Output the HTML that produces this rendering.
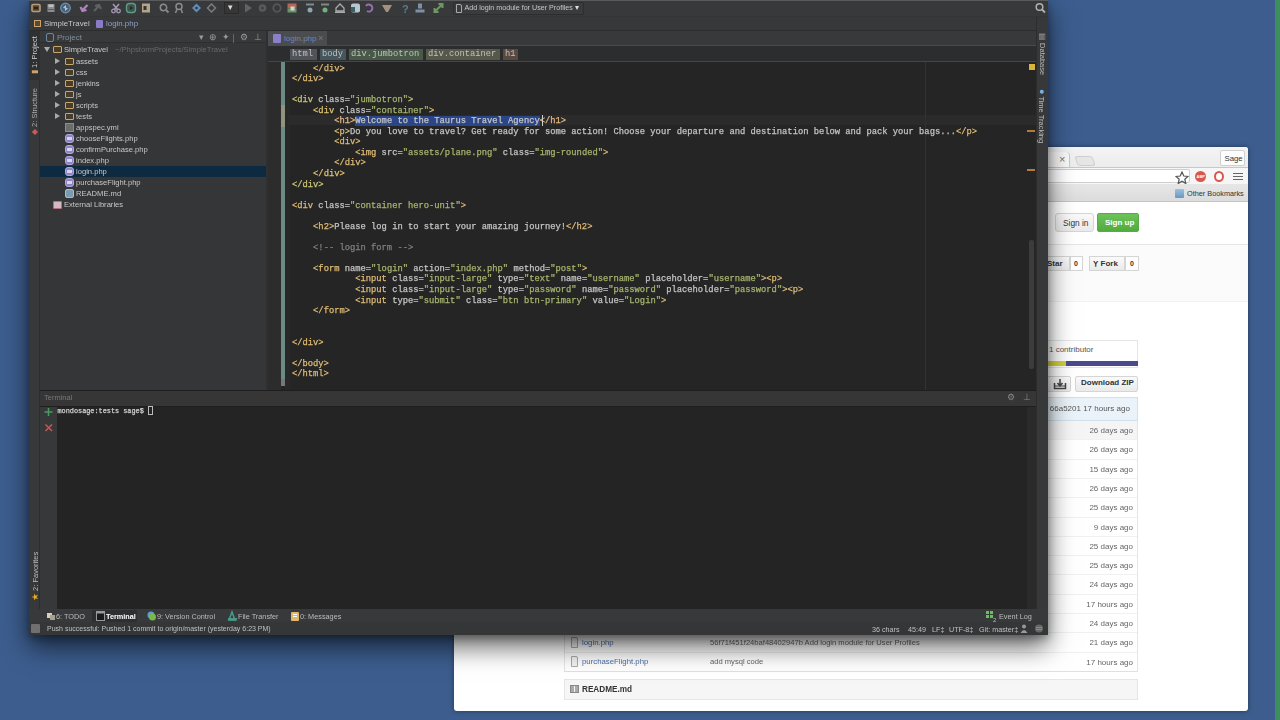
<!DOCTYPE html>
<html><head><meta charset="utf-8">
<style>
*{box-sizing:border-box}
html,body{margin:0;padding:0}
body{width:1280px;height:720px;overflow:hidden;position:relative;background:#3c5c8d;font-family:"Liberation Sans",sans-serif}
.a{position:absolute}
.code{position:absolute;font-family:"Liberation Mono",monospace;font-size:8.79px;white-space:pre;line-height:10.55px;color:#c4c4c4;-webkit-text-stroke:0.25px currentColor}
.t{color:#dfbb76}
.v{color:#a6b46e}
.cm{color:#7f7f7f}
</style></head><body>
<div style="position:absolute;left:0;top:0;width:1280px;height:720px;filter:blur(0.4px)"><div class="a" style="left:0px;top:0px;width:1280px;height:720px;background:#3c5d8e"></div>
<div class="a" style="left:1271px;top:0px;width:4px;height:720px;background:#3f5b90"></div>
<div class="a" style="left:1275px;top:0px;width:5px;height:720px;background:#3a8f5c"></div>
<div class="a" style="left:454px;top:147px;width:794px;height:564px;background:#fff;border-radius:3px;box-shadow:0 0 5px rgba(0,0,0,.4)"></div>
<div class="a" style="left:454px;top:147px;width:794px;height:20px;background:linear-gradient(#f4f4f4,#ececec);border-radius:3px 3px 0 0"></div>
<div class="a" style="left:454px;top:152px;width:616px;height:15px;background:#fafafa;border-right:1px solid #c9c9c9;border-radius:0 4px 0 0"></div>
<div class="a" style="left:1059px;top:153px;white-space:nowrap;font-size:11px;color:#777">×</div>
<div class="a" style="left:1076px;top:156px;width:18px;height:10px;background:#e6e6e6;border:1px solid #cfcfcf;border-radius:3px;transform:skewX(20deg)"></div>
<div class="a" style="left:1220px;top:150px;width:25px;height:16px;background:#fdfdfd;border:1px solid #d0d0d0;border-radius:2px"></div>
<div class="a" style="left:1224.5px;top:153.5px;white-space:nowrap;font-size:7.8px;color:#333">Sage</div>
<div class="a" style="left:454px;top:167px;width:794px;height:17px;background:#f6f6f6;border-top:1px solid #c8c8c8"></div>
<div class="a" style="left:454px;top:169px;width:736px;height:14px;background:#fff;border:1px solid #cfcfcf;border-radius:2px"></div>
<svg class="a" style="left:1175px;top:171px" width="14" height="14"><path d="M7 1 L8.8 5 L13 5.4 L9.8 8.2 L10.8 12.5 L7 10.2 L3.2 12.5 L4.2 8.2 L1 5.4 L5.2 5Z" fill="#fff" stroke="#555" stroke-width="1.2"/></svg>
<div class="a" style="left:1195px;top:171px;width:11px;height:11px;background:#d9574c;border-radius:50%"></div>
<div class="a" style="left:1196.5px;top:173.5px;white-space:nowrap;font-size:4px;color:#fff;font-weight:bold">ABP</div>
<div class="a" style="left:1214px;top:171px;width:10px;height:11px;background:#fff;border:2px solid #d9574c;border-radius:50%"></div>
<div class="a" style="left:1233px;top:173px;width:10px;height:1px;background:#666"></div>
<div class="a" style="left:1233px;top:176px;width:10px;height:1px;background:#666"></div>
<div class="a" style="left:1233px;top:179px;width:10px;height:1px;background:#666"></div>
<div class="a" style="left:454px;top:184px;width:794px;height:18px;background:linear-gradient(#e6e6e6,#dcdcdc);border-bottom:1px solid #c4c4c4"></div>
<div class="a" style="left:1175px;top:189px;width:9px;height:9px;background:linear-gradient(#9cc0e0,#6a98c0);border-radius:1px"></div>
<div class="a" style="left:1187px;top:189px;white-space:nowrap;font-size:7.3px;color:#333">Other Bookmarks</div>
<div class="a" style="left:454px;top:202px;width:794px;height:43px;background:#fff;border-bottom:1px solid #e5e5e5"></div>
<div class="a" style="left:1055px;top:213px;width:39px;height:19px;background:linear-gradient(#fafafa,#eaeaea);border:1px solid #d5d5d5;border-radius:3px"></div>
<div class="a" style="left:1063px;top:217.5px;white-space:nowrap;font-size:8.3px;color:#333">Sign in</div>
<div class="a" style="left:1097px;top:213px;width:42px;height:19px;background:linear-gradient(#6cc35a,#52ab3c);border:1px solid #5aaa45;border-radius:2px"></div>
<div class="a" style="left:1105px;top:217.5px;white-space:nowrap;font-size:8px;color:#fff;font-weight:bold">Sign up</div>
<div class="a" style="left:454px;top:245px;width:794px;height:57px;background:#fbfbfb;border-bottom:1px solid #f1f1f1"></div>
<div class="a" style="left:1040px;top:256px;width:30px;height:15px;background:linear-gradient(#fafafa,#eaeaea);border:1px solid #d5d5d5"></div>
<div class="a" style="left:1047px;top:258.5px;white-space:nowrap;font-size:8px;color:#333;font-weight:bold">Star</div>
<div class="a" style="left:1070px;top:256px;width:13px;height:15px;background:#fff;border:1px solid #d5d5d5"></div>
<div class="a" style="left:1074px;top:259.5px;white-space:nowrap;font-size:7px;color:#333;font-weight:bold">0</div>
<div class="a" style="left:1089px;top:256px;width:36px;height:15px;background:linear-gradient(#fafafa,#eaeaea);border:1px solid #d5d5d5"></div>
<div class="a" style="left:1093px;top:258.5px;white-space:nowrap;font-size:8px;color:#333;font-weight:bold">Ỵ Fork</div>
<div class="a" style="left:1125px;top:256px;width:14px;height:15px;background:#fff;border:1px solid #d5d5d5"></div>
<div class="a" style="left:1130px;top:259.5px;white-space:nowrap;font-size:7px;color:#333;font-weight:bold">0</div>
<div class="a" style="left:1000px;top:340px;width:138px;height:28px;background:#fff;border:1px solid #e5e5e5"></div>
<div class="a" style="left:1049px;top:345px;white-space:nowrap;font-size:8px;color:#555">1 contributor</div>
<div class="a" style="left:1000px;top:361px;width:66px;height:5px;background:#d4d13a"></div>
<div class="a" style="left:1066px;top:361px;width:72px;height:5px;background:#4b4a8e"></div>
<div class="a" style="left:1040px;top:376px;width:31px;height:16px;background:linear-gradient(#fafafa,#eaeaea);border:1px solid #d5d5d5;border-radius:2px"></div>
<svg class="a" style="left:1053px;top:377px" width="14" height="14"><path d="M1.5 6 V11.5 H12.5 V6" fill="none" stroke="#444" stroke-width="1.5"/><path d="M7 2 V8.5 M4.5 6 L7 8.8 L9.5 6" fill="none" stroke="#444" stroke-width="1.5"/><path d="M1.5 9 H12.5" stroke="#444" stroke-width="1"/></svg>
<div class="a" style="left:1075px;top:376px;width:63px;height:16px;background:linear-gradient(#fafafa,#eaeaea);border:1px solid #d5d5d5;border-radius:2px"></div>
<div class="a" style="left:1081px;top:378px;white-space:nowrap;font-size:8px;color:#333;font-weight:bold">Download ZIP</div>
<div class="a" style="left:564px;top:397px;width:574px;height:24px;background:#eaf3fa;border:1px solid #cfe1ee"></div>
<div class="a" style="left:1044px;top:404px;white-space:nowrap;font-size:8px;color:#555">il 66a5201 17 hours ago</div>
<div class="a" style="left:564px;top:421px;width:574px;height:19px;background:#f5f5f5;border-bottom:1px solid #f1f1f1"></div>
<div class="a" style="left:1000px;top:426px;width:133px;text-align:right;font-size:8px;color:#666;white-space:nowrap">26 days ago</div>
<div class="a" style="left:564px;top:440px;width:574px;height:20px;background:#fff;border-bottom:1px solid #f1f1f1"></div>
<div class="a" style="left:1000px;top:445px;width:133px;text-align:right;font-size:8px;color:#666;white-space:nowrap">26 days ago</div>
<div class="a" style="left:564px;top:460px;width:574px;height:19px;background:#fff;border-bottom:1px solid #f1f1f1"></div>
<div class="a" style="left:1000px;top:465px;width:133px;text-align:right;font-size:8px;color:#666;white-space:nowrap">15 days ago</div>
<div class="a" style="left:564px;top:479px;width:574px;height:19px;background:#fff;border-bottom:1px solid #f1f1f1"></div>
<div class="a" style="left:1000px;top:484px;width:133px;text-align:right;font-size:8px;color:#666;white-space:nowrap">26 days ago</div>
<div class="a" style="left:564px;top:498px;width:574px;height:20px;background:#fff;border-bottom:1px solid #f1f1f1"></div>
<div class="a" style="left:1000px;top:503px;width:133px;text-align:right;font-size:8px;color:#666;white-space:nowrap">25 days ago</div>
<div class="a" style="left:564px;top:518px;width:574px;height:19px;background:#fff;border-bottom:1px solid #f1f1f1"></div>
<div class="a" style="left:1000px;top:523px;width:133px;text-align:right;font-size:8px;color:#666;white-space:nowrap">9 days ago</div>
<div class="a" style="left:564px;top:537px;width:574px;height:19px;background:#fff;border-bottom:1px solid #f1f1f1"></div>
<div class="a" style="left:1000px;top:542px;width:133px;text-align:right;font-size:8px;color:#666;white-space:nowrap">25 days ago</div>
<div class="a" style="left:564px;top:556px;width:574px;height:19px;background:#fff;border-bottom:1px solid #f1f1f1"></div>
<div class="a" style="left:1000px;top:561px;width:133px;text-align:right;font-size:8px;color:#666;white-space:nowrap">25 days ago</div>
<div class="a" style="left:564px;top:575px;width:574px;height:20px;background:#fff;border-bottom:1px solid #f1f1f1"></div>
<div class="a" style="left:1000px;top:580px;width:133px;text-align:right;font-size:8px;color:#666;white-space:nowrap">24 days ago</div>
<div class="a" style="left:564px;top:595px;width:574px;height:19px;background:#fff;border-bottom:1px solid #f1f1f1"></div>
<div class="a" style="left:1000px;top:600px;width:133px;text-align:right;font-size:8px;color:#666;white-space:nowrap">17 hours ago</div>
<div class="a" style="left:564px;top:614px;width:574px;height:19px;background:#fff;border-bottom:1px solid #f1f1f1"></div>
<div class="a" style="left:1000px;top:619px;width:133px;text-align:right;font-size:8px;color:#666;white-space:nowrap">24 days ago</div>
<div class="a" style="left:564px;top:633px;width:574px;height:20px;background:#fff;border-bottom:1px solid #f1f1f1"></div>
<div class="a" style="left:1000px;top:638px;width:133px;text-align:right;font-size:8px;color:#666;white-space:nowrap">21 days ago</div>
<div class="a" style="left:564px;top:653px;width:574px;height:19px;background:#fff;border-bottom:1px solid #f1f1f1"></div>
<div class="a" style="left:1000px;top:658px;width:133px;text-align:right;font-size:8px;color:#666;white-space:nowrap">17 hours ago</div>
<div class="a" style="left:564px;top:421px;width:1px;height:251px;background:#e5e5e5"></div>
<div class="a" style="left:1137px;top:421px;width:1px;height:251px;background:#e5e5e5"></div>
<div class="a" style="left:564px;top:671px;width:574px;height:1px;background:#e0e0e0"></div>
<div class="a" style="left:571px;top:637px;width:7px;height:11px;border:1px solid #aaa;background:#f4f4f4;border-radius:0 2px 0 0"></div>
<div class="a" style="left:582px;top:638px;white-space:nowrap;font-size:7.8px;color:#4b6fa8">login.php</div>
<div class="a" style="left:710px;top:638px;white-space:nowrap;font-size:7.6px;color:#666">56f71f451f24baf48402947b Add login module for User Profiles</div>
<div class="a" style="left:571px;top:656px;width:7px;height:11px;border:1px solid #aaa;background:#f4f4f4;border-radius:0 2px 0 0"></div>
<div class="a" style="left:582px;top:657px;white-space:nowrap;font-size:7.8px;color:#4b6fa8">purchaseFlight.php</div>
<div class="a" style="left:710px;top:657px;white-space:nowrap;font-size:7.6px;color:#666">add mysql code</div>
<div class="a" style="left:564px;top:679px;width:574px;height:21px;background:#f6f6f6;border:1px solid #e6e6e6"></div>
<div class="a" style="left:570px;top:685px;width:9px;height:8px;border:1px solid #888;background:linear-gradient(90deg,#aaa 0 45%,#f6f6f6 45% 55%,#aaa 55%)"></div>
<div class="a" style="left:582px;top:684.5px;white-space:nowrap;font-size:8.2px;color:#333;font-weight:bold">README.md</div>
<div class="a" style="left:29px;top:0px;width:1019px;height:635px;background:#363739;box-shadow:0 12px 24px rgba(0,0,0,.6),0 3px 8px rgba(0,0,0,.3)"></div>
<div class="a" style="left:29px;top:0px;width:1019px;height:1px;background:#5a5a5a"></div>
<div class="a" style="left:29px;top:1px;width:1019px;height:15px;background:#38393b"></div>
<div class="a" style="left:29px;top:16px;width:1019px;height:1px;background:#343537"></div>
<svg class="a" style="left:0;top:0;opacity:.85" width="460" height="17"><g transform="translate(36,8)"><rect x="-4" y="-3.5" width="8" height="7" rx="1" fill="#5a4630" stroke="#cdb088" stroke-width="1.6"/><rect x="-2" y="-1" width="4" height="2" fill="#2a2010"/></g><g transform="translate(51,8)"><rect x="-3.5" y="-4" width="7" height="8" fill="#9a9a9a"/><rect x="-2.5" y="-3.5" width="5" height="2.5" fill="#d8d8d8"/><rect x="-3.5" y="1" width="7" height="1" fill="#666"/></g><g transform="translate(65.5,8)"><circle r="4.8" fill="#4a6a88" stroke="#7aa0c0" stroke-width="1.2"/><path d="M-2.5 -0.5 L0.5 -3 L0.5 1 Z M2.5 0.5 L-0.5 3 L-0.5 -1Z" fill="#c8d8e8"/></g><g transform="translate(83.5,8)"><path d="M4 -3 L-1 2 M-3 -1 L-1 3 L3 2" stroke="#c890d8" stroke-width="2.2" fill="none"/></g><g transform="translate(98,8)"><path d="M-4 3 L1 -2 M3 1 L1 -3 L-3 -2" stroke="#6a6a6a" stroke-width="2" fill="none"/></g><g transform="translate(116,8)"><path d="M-3 -4 L2 2 M3 -4 L-2 2" stroke="#b8a8c8" stroke-width="1.6"/><circle cx="-2.5" cy="3" r="1.8" fill="none" stroke="#b8a8c8" stroke-width="1.3"/><circle cx="2.5" cy="3" r="1.8" fill="none" stroke="#b8a8c8" stroke-width="1.3"/></g><g transform="translate(131,8)"><rect x="-4.5" y="-4.5" width="9" height="9" rx="3" fill="#3a5a50" stroke="#6aa898" stroke-width="1.4"/><path d="M-1 -2 L2 0 L-1 2Z" fill="#1a2a20"/></g><g transform="translate(146,8)"><rect x="-4" y="-4.5" width="8" height="9" fill="#c8b898"/><rect x="-2.5" y="-2" width="3" height="4" fill="#333"/></g><g transform="translate(164,8)"><circle cx="-0.5" cy="-0.5" r="3.2" fill="none" stroke="#9a9a9a" stroke-width="1.5"/><path d="M2 2 L4.5 4.5" stroke="#9a9a9a" stroke-width="1.8"/></g><g transform="translate(179,8)"><circle cx="0" cy="-1.5" r="3" fill="none" stroke="#9a9a9a" stroke-width="1.5"/><path d="M-2 1 L-3.5 5 M2 1 L3.5 5" stroke="#9a9a9a" stroke-width="1.5"/></g><g transform="translate(196.5,8)"><path d="M0 -4.5 L4.5 0 L0 4.5 L-4.5 0Z" fill="#6a9ac8"/><circle r="1.3" fill="#2a3a4a"/></g><g transform="translate(211.5,8)"><path d="M0 -4 L4 0 L0 4 L-4 0Z" fill="none" stroke="#8a8a8a" stroke-width="1.5"/></g><g transform="translate(248,8)"><path d="M-3 -4.5 L4 0 L-3 4.5Z" fill="#6a6a6a"/></g><g transform="translate(262.5,8)"><circle r="3.8" fill="#606060"/><circle r="1.5" fill="#444"/></g><g transform="translate(277,8)"><circle r="3.8" fill="none" stroke="#5c5c5c" stroke-width="1.8"/></g><g transform="translate(292,8)"><rect x="-4.5" y="-4.5" width="9" height="5" fill="#c8705a"/><rect x="-4.5" y="0.5" width="9" height="4" fill="#6aa870"/><rect x="-1.5" y="-1.5" width="4" height="4" fill="#eee"/></g><g transform="translate(310,8)"><rect x="-4" y="-4.5" width="8" height="2" fill="#8a9aa8"/><circle cx="0" cy="2" r="2.5" fill="#9ab8c8"/></g><g transform="translate(325,8)"><rect x="-4" y="-4.5" width="8" height="2" fill="#8a9a8a"/><circle cx="0" cy="2" r="2.5" fill="#7ac88a"/></g><g transform="translate(340,8)"><path d="M-4 3 L-4 0 L0 -4 L4 0 L4 3Z" fill="none" stroke="#c0c0c0" stroke-width="1.3"/><rect x="-5" y="3.5" width="10" height="1.5" fill="#c0c0c0"/></g><g transform="translate(355.5,8)"><rect x="-4.5" y="-4.5" width="9" height="9" rx="2" fill="#cfe0e8"/><rect x="-4.5" y="-1" width="4" height="5" fill="#3a6a6a"/></g><g transform="translate(369,8)"><path d="M-3 -2 A3.5 3.5 0 1 1 -2 3" stroke="#a878c8" stroke-width="2" fill="none"/></g><g transform="translate(387,8)"><path d="M-5 -3 L5 -3 L1 4 L-1 4Z" fill="#b8a088"/></g><g transform="translate(405,8)"><text x="-3" y="4.5" font-size="11" font-weight="bold" font-family="Liberation Sans" fill="#5a8a98">?</text></g><g transform="translate(420,8)"><rect x="-2" y="-4.5" width="4" height="5" fill="#8aa0b8"/><rect x="-4.5" y="1.5" width="9" height="3" fill="#8aa0b8"/></g><g transform="translate(438.5,8)"><path d="M-4 4 L4 -4 M0 -4 L4 -4 L4 0 M-4 0 L-4 4 L0 4" stroke="#7aa868" stroke-width="2" fill="none"/></g></svg>
<div class="a" style="left:224px;top:2px;width:15px;height:12px;border:1px solid #2a2a2a;background:#363636"></div>
<div class="a" style="left:228px;top:2px;white-space:nowrap;font-size:9px;color:#ddd">▾</div>
<div class="a" style="left:453px;top:2px;width:131px;height:13px;border:1px solid #2e2e2e;border-radius:2px;background:#3a3b3d"></div>
<div class="a" style="left:456px;top:3.5px;width:6px;height:9.5px;border:1px solid #aaa;border-radius:0 2px 0 0"></div>
<div class="a" style="left:464.5px;top:4px;white-space:nowrap;font-size:7.15px;color:#c8c8c8">Add login module for User Profiles</div>
<div class="a" style="left:575px;top:3px;white-space:nowrap;font-size:8px;color:#ddd">▾</div>
<div class="a" style="left:29px;top:17px;width:1019px;height:14px;background:#37383a;border-bottom:1px solid #2c2c2c"></div>
<div class="a" style="left:34px;top:20px;width:7px;height:7px;border:1.5px solid #c9a470;background:#5a4a30"></div>
<div class="a" style="left:44px;top:19px;white-space:nowrap;font-size:7.9px;color:#c8c8c8">SimpleTravel</div>
<div class="a" style="left:96px;top:20px;width:7px;height:8px;background:#8a7bc8;border-radius:1px"></div>
<div class="a" style="left:106px;top:19px;white-space:nowrap;font-size:7.9px;color:#8fa0c8">login.php</div>
<div class="a" style="left:29px;top:31px;width:11px;height:604px;background:#37383a;border-right:1px solid #2d2d2d"></div>
<div class="a" style="left:29px;top:31px;width:11px;height:49px;background:#2f3032"></div>
<div class="a" style="left:29px;top:31px;white-space:nowrap;width:11px;height:47px"><div style="transform:rotate(-90deg);transform-origin:0 0;position:absolute;left:1px;top:43px;font-size:7.5px;color:#d0d0d0;white-space:nowrap"><span style="color:#c9a470">▮</span> 1: Project</div></div>
<div class="a" style="left:29px;top:82px;white-space:nowrap;width:11px;height:55px"><div style="transform:rotate(-90deg);transform-origin:0 0;position:absolute;left:1px;top:53px;font-size:7.5px;color:#aaa;white-space:nowrap"><span style="color:#c85a5a">◆</span> 2: Structure</div></div>
<div class="a" style="left:29px;top:543px;white-space:nowrap;width:11px;height:60px"><div style="transform:rotate(-90deg);transform-origin:0 0;position:absolute;left:1px;top:58px;font-size:7.5px;color:#bbb;white-space:nowrap"><span style="color:#e8a828;font-size:9px">★</span> 2: Favorites</div></div>
<div class="a" style="left:40px;top:31px;width:227px;height:360px;background:#353638"></div>
<div class="a" style="left:40px;top:31px;width:227px;height:12px;background:#38393b;border-bottom:1px solid #2e2e2e"></div>
<div class="a" style="left:46px;top:33px;width:8px;height:9px;border:1.5px solid #6a8aa8;border-radius:2px"></div>
<div class="a" style="left:57px;top:33px;white-space:nowrap;font-size:8px;color:#8090a0">Project</div>
<div class="a" style="left:199px;top:32px;white-space:nowrap;font-size:9px;color:#999">▾</div>
<div class="a" style="left:209px;top:32px;white-space:nowrap;font-size:9px;color:#999">⊕</div>
<div class="a" style="left:222px;top:32px;white-space:nowrap;font-size:9px;color:#999">✦</div>
<div class="a" style="left:240px;top:32px;white-space:nowrap;font-size:9px;color:#999">⚙</div>
<div class="a" style="left:254px;top:32px;white-space:nowrap;font-size:9px;color:#999">⊥</div>
<div class="a" style="left:233px;top:34px;width:1px;height:9px;background:#666"></div>
<div class="a" style="left:44px;top:47px;width:0;height:0;border-top:5px solid #aaa;border-left:3px solid transparent;border-right:3px solid transparent"></div>
<div class="a" style="left:53px;top:46px;width:9px;height:7px;border:1.5px solid #c8a870;background:#4a3d28;border-radius:1px"></div>
<div class="a" style="left:64px;top:44px;white-space:nowrap;font-size:7.6px;color:#c8c8c8;line-height:11px">SimpleTravel</div>
<div class="a" style="left:115px;top:44px;white-space:nowrap;font-size:7.6px;color:#6a6a6a;line-height:11px">~/PhpstormProjects/SimpleTravel</div>
<div class="a" style="left:55px;top:58px;width:0;height:0;border-left:5px solid #aaa;border-top:3.5px solid transparent;border-bottom:3.5px solid transparent"></div>
<div class="a" style="left:65px;top:58px;width:9px;height:7px;border:1.5px solid #c8a870;background:#4a3d28;border-radius:1px"></div>
<div class="a" style="left:76px;top:56px;white-space:nowrap;font-size:7.6px;color:#c8c8c8;line-height:11px">assets</div>
<div class="a" style="left:55px;top:69px;width:0;height:0;border-left:5px solid #aaa;border-top:3.5px solid transparent;border-bottom:3.5px solid transparent"></div>
<div class="a" style="left:65px;top:69px;width:9px;height:7px;border:1.5px solid #c8a870;background:#4a3d28;border-radius:1px"></div>
<div class="a" style="left:76px;top:67px;white-space:nowrap;font-size:7.6px;color:#c8c8c8;line-height:11px">css</div>
<div class="a" style="left:55px;top:80px;width:0;height:0;border-left:5px solid #aaa;border-top:3.5px solid transparent;border-bottom:3.5px solid transparent"></div>
<div class="a" style="left:65px;top:80px;width:9px;height:7px;border:1.5px solid #c8a870;background:#4a3d28;border-radius:1px"></div>
<div class="a" style="left:76px;top:78px;white-space:nowrap;font-size:7.6px;color:#c8c8c8;line-height:11px">jenkins</div>
<div class="a" style="left:55px;top:91px;width:0;height:0;border-left:5px solid #aaa;border-top:3.5px solid transparent;border-bottom:3.5px solid transparent"></div>
<div class="a" style="left:65px;top:91px;width:9px;height:7px;border:1.5px solid #c8a870;background:#4a3d28;border-radius:1px"></div>
<div class="a" style="left:76px;top:89px;white-space:nowrap;font-size:7.6px;color:#c8c8c8;line-height:11px">js</div>
<div class="a" style="left:55px;top:102px;width:0;height:0;border-left:5px solid #aaa;border-top:3.5px solid transparent;border-bottom:3.5px solid transparent"></div>
<div class="a" style="left:65px;top:102px;width:9px;height:7px;border:1.5px solid #c8a870;background:#4a3d28;border-radius:1px"></div>
<div class="a" style="left:76px;top:100px;white-space:nowrap;font-size:7.6px;color:#c8c8c8;line-height:11px">scripts</div>
<div class="a" style="left:55px;top:113px;width:0;height:0;border-left:5px solid #aaa;border-top:3.5px solid transparent;border-bottom:3.5px solid transparent"></div>
<div class="a" style="left:65px;top:113px;width:9px;height:7px;border:1.5px solid #c8a870;background:#4a3d28;border-radius:1px"></div>
<div class="a" style="left:76px;top:111px;white-space:nowrap;font-size:7.6px;color:#c8c8c8;line-height:11px">tests</div>
<div class="a" style="left:65px;top:123px;width:9px;height:9px;background:#6a6e6a;border:1px solid #8a9088"></div>
<div class="a" style="left:76px;top:122px;white-space:nowrap;font-size:7.6px;color:#c8c8c8;line-height:11px">appspec.yml</div>
<div class="a" style="left:65px;top:134px;width:9px;height:9px;background:#8c84c0;border-radius:3px;border:1.5px solid #b0a8e0"></div>
<div class="a" style="left:67px;top:137px;width:5px;height:3px;background:#d8d4f0"></div>
<div class="a" style="left:76px;top:133px;white-space:nowrap;font-size:7.6px;color:#c8c8c8;line-height:11px">chooseFlights.php</div>
<div class="a" style="left:65px;top:145px;width:9px;height:9px;background:#8c84c0;border-radius:3px;border:1.5px solid #b0a8e0"></div>
<div class="a" style="left:67px;top:148px;width:5px;height:3px;background:#d8d4f0"></div>
<div class="a" style="left:76px;top:144px;white-space:nowrap;font-size:7.6px;color:#c8c8c8;line-height:11px">confirmPurchase.php</div>
<div class="a" style="left:65px;top:156px;width:9px;height:9px;background:#8c84c0;border-radius:3px;border:1.5px solid #b0a8e0"></div>
<div class="a" style="left:67px;top:159px;width:5px;height:3px;background:#d8d4f0"></div>
<div class="a" style="left:76px;top:155px;white-space:nowrap;font-size:7.6px;color:#c8c8c8;line-height:11px">index.php</div>
<div class="a" style="left:40px;top:166px;width:227px;height:11px;background:#0d2a40"></div>
<div class="a" style="left:65px;top:167px;width:9px;height:9px;background:#8c84c0;border-radius:3px;border:1.5px solid #b0a8e0"></div>
<div class="a" style="left:67px;top:170px;width:5px;height:3px;background:#d8d4f0"></div>
<div class="a" style="left:76px;top:166px;white-space:nowrap;font-size:7.6px;color:#c8c8c8;line-height:11px">login.php</div>
<div class="a" style="left:65px;top:178px;width:9px;height:9px;background:#8c84c0;border-radius:3px;border:1.5px solid #b0a8e0"></div>
<div class="a" style="left:67px;top:181px;width:5px;height:3px;background:#d8d4f0"></div>
<div class="a" style="left:76px;top:177px;white-space:nowrap;font-size:7.6px;color:#c8c8c8;line-height:11px">purchaseFlight.php</div>
<div class="a" style="left:65px;top:189px;width:9px;height:9px;background:#7a9cb0;border-radius:2px;border:1.5px solid #a0c0d0"></div>
<div class="a" style="left:76px;top:188px;white-space:nowrap;font-size:7.6px;color:#c8c8c8;line-height:11px">README.md</div>
<div class="a" style="left:53px;top:201px;width:9px;height:8px;background:#d8b8c0;border-radius:1px;border:1px solid #b07080"></div>
<div class="a" style="left:64px;top:199px;white-space:nowrap;font-size:7.6px;color:#c8c8c8;line-height:11px">External Libraries</div>
<div class="a" style="left:266px;top:31px;width:2px;height:360px;background:#2e2f31"></div>
<div class="a" style="left:268px;top:31px;width:768px;height:15px;background:#38393b;border-bottom:1px solid #4a4a4a"></div>
<div class="a" style="left:268px;top:31px;width:59px;height:15px;background:#4a4c4f"></div>
<div class="a" style="left:273px;top:34px;width:8px;height:9px;background:#8a80c8;border-radius:1px"></div>
<div class="a" style="left:284px;top:34px;white-space:nowrap;font-size:8px;color:#6f86b8">login.php</div>
<div class="a" style="left:318px;top:33px;white-space:nowrap;font-size:9px;color:#777">×</div>
<div class="a" style="left:268px;top:46px;width:768px;height:16px;background:#2c2d2f;border-bottom:1px solid #454545"></div>
<div class="a" style="left:290px;top:49px;width:27px;height:11px;background:#505357"></div>
<div class="a" style="left:292px;top:49px;white-space:nowrap;font-family:'Liberation Mono',monospace;font-size:8.75px;line-height:11px;color:#c0c0c0">html</div>
<div class="a" style="left:320px;top:49px;width:26px;height:11px;background:#45565c"></div>
<div class="a" style="left:322px;top:49px;white-space:nowrap;font-family:'Liberation Mono',monospace;font-size:8.75px;line-height:11px;color:#c0c0c0">body</div>
<div class="a" style="left:349px;top:49px;width:74px;height:11px;background:#485a47"></div>
<div class="a" style="left:351px;top:49px;white-space:nowrap;font-family:'Liberation Mono',monospace;font-size:8.75px;line-height:11px;color:#c0c0c0">div.jumbotron</div>
<div class="a" style="left:426px;top:49px;width:74px;height:11px;background:#56594a"></div>
<div class="a" style="left:428px;top:49px;white-space:nowrap;font-family:'Liberation Mono',monospace;font-size:8.75px;line-height:11px;color:#c0c0c0">div.container</div>
<div class="a" style="left:503px;top:49px;width:15px;height:11px;background:#5a493e"></div>
<div class="a" style="left:505px;top:49px;white-space:nowrap;font-family:'Liberation Mono',monospace;font-size:8.75px;line-height:11px;color:#c0c0c0">h1</div>
<div class="a" style="left:268px;top:62px;width:768px;height:328px;background:#252525"></div>
<div class="a" style="left:268px;top:62px;width:13px;height:329px;background:#2c2c2c"></div>
<div class="a" style="left:285px;top:62px;width:5px;height:329px;background:#282828"></div>
<div class="a" style="left:281px;top:62px;width:4px;height:317px;background:#6a8c84"></div>
<div class="a" style="left:281px;top:105px;width:4px;height:22px;background:#8e9480"></div>
<div class="a" style="left:281px;top:379px;width:4px;height:7px;background:#777"></div>
<div class="a" style="left:288px;top:115px;width:748px;height:10px;background:#2b2b2b"></div>
<div class="a" style="left:925px;top:62px;width:1px;height:329px;background:#323232"></div>
<div class="a" style="left:1029px;top:240px;width:5px;height:129px;background:#3c3c3c;border-radius:2px"></div>
<div class="a" style="left:1029px;top:64px;width:6px;height:6px;background:#d9b43a"></div>
<div class="a" style="left:1027px;top:130px;width:8px;height:2px;background:#b07a40"></div>
<div class="a" style="left:1027px;top:169px;width:8px;height:2px;background:#b07a40"></div>
<div class="code" style="left:292px;top:63.5px">    <span class="t">&lt;/div&gt;</span>
<span class="t">&lt;/div&gt;</span>

<span class="t" style="color:#cbc67a">&lt;div </span>class=<span class="v">&quot;jumbotron&quot;</span><span class="t" style="color:#cbc67a">&gt;</span>
    <span class="t" style="color:#dcc270">&lt;div </span>class=<span class="v">&quot;container&quot;</span><span class="t" style="color:#dcc270">&gt;</span>
        <span class="t" style="color:#e2b684">&lt;h1&gt;</span><span style="background:#2a4688;color:#c4c4c4">Welcome to the Taurus Travel Agency</span><span class="t" style="color:#e2b684">&lt;/h1&gt;</span>
        <span class="t">&lt;p&gt;</span>Do you love to travel? Get ready for some action! Choose your departure and destination below and pack your bags...<span class="t">&lt;/p&gt;</span>
        <span class="t">&lt;div&gt;</span>
            <span class="t">&lt;img </span>src=<span class="v">&quot;assets/plane.png&quot;</span> class=<span class="v">&quot;img-rounded&quot;</span><span class="t">&gt;</span>
        <span class="t">&lt;/div&gt;</span>
    <span class="t" style="color:#dcc270">&lt;/div&gt;</span>
<span class="t" style="color:#cbc67a">&lt;/div&gt;</span>

<span class="t">&lt;div </span>class=<span class="v">&quot;container hero-unit&quot;</span><span class="t">&gt;</span>

    <span class="t">&lt;h2&gt;</span>Please log in to start your amazing journey!<span class="t">&lt;/h2&gt;</span>

    <span class="cm">&lt;!-- login form --&gt;</span>

    <span class="t">&lt;form </span>name=<span class="v">&quot;login&quot;</span> action=<span class="v">&quot;index.php&quot;</span> method=<span class="v">&quot;post&quot;</span><span class="t">&gt;</span>
            <span class="t">&lt;input </span>class=<span class="v">&quot;input-large&quot;</span> type=<span class="v">&quot;text&quot;</span> name=<span class="v">&quot;username&quot;</span> placeholder=<span class="v">&quot;username&quot;</span><span class="t">&gt;&lt;p&gt;</span>
            <span class="t">&lt;input </span>class=<span class="v">&quot;input-large&quot;</span> type=<span class="v">&quot;password&quot;</span> name=<span class="v">&quot;password&quot;</span> placeholder=<span class="v">&quot;password&quot;</span><span class="t">&gt;&lt;p&gt;</span>
            <span class="t">&lt;input </span>type=<span class="v">&quot;submit&quot;</span> class=<span class="v">&quot;btn btn-primary&quot;</span> value=<span class="v">&quot;Login&quot;</span><span class="t">&gt;</span>
    <span class="t">&lt;/form&gt;</span>


<span class="t">&lt;/div&gt;</span>

<span class="t">&lt;/body&gt;</span>
<span class="t">&lt;/html&gt;</span></div>
<div class="a" style="left:542px;top:115px;width:1px;height:11px;background:#d0d0d0"></div>
<div class="a" style="left:1036px;top:17px;width:12px;height:618px;background:#37383a;border-left:1px solid #2d2d2d"></div>
<svg class="a" style="left:1034px;top:1px" width="14" height="14"><circle cx="5.5" cy="6" r="3.3" fill="none" stroke="#b0b0b0" stroke-width="1.5"/><path d="M8 8.5 L11 11.5" stroke="#b0b0b0" stroke-width="1.8"/></svg>
<div class="a" style="left:1036px;top:33px;white-space:nowrap;width:12px;height:45px"><div style="transform:rotate(90deg);transform-origin:0 0;position:absolute;left:11px;top:0;font-size:7.5px;color:#bbb;white-space:nowrap"><span style="color:#aaa">▤</span> Database</div></div>
<div class="a" style="left:1036px;top:89px;white-space:nowrap;width:12px;height:60px"><div style="transform:rotate(90deg);transform-origin:0 0;position:absolute;left:11px;top:0;font-size:7.5px;color:#bbb;white-space:nowrap"><span style="color:#7ab0e0;font-size:9px">●</span> Time Tracking</div></div>
<div class="a" style="left:40px;top:390px;width:996px;height:17px;background:#363636;border-top:1px solid #1e1e1e;border-bottom:1px solid #1f1f1f"></div>
<div class="a" style="left:44px;top:393px;white-space:nowrap;font-size:7.5px;color:#777">Terminal</div>
<div class="a" style="left:1007px;top:392px;white-space:nowrap;font-size:9px;color:#888">⚙</div>
<div class="a" style="left:1023px;top:392px;white-space:nowrap;font-size:9px;color:#888">⊥</div>
<div class="a" style="left:40px;top:407px;width:17px;height:202px;background:#37383a"></div>
<svg class="a" style="left:43px;top:406px" width="12" height="12"><path d="M5.5 2 V10 M1.5 6 H9.5" stroke="#4a9a60" stroke-width="1.5"/></svg>
<svg class="a" style="left:43px;top:422px" width="12" height="12"><path d="M2.5 2.5 L9 9 M9 2.5 L2.5 9" stroke="#c05a50" stroke-width="1.6"/></svg>
<div class="a" style="left:57px;top:407px;width:970px;height:202px;background:#242424"></div>
<div class="a" style="left:1027px;top:407px;width:9px;height:202px;background:#2a2a2a"></div>
<div class="code" style="left:57.5px;top:406px;color:#d0d0d0;font-size:6.85px">mondosage:tests sage$</div>
<div class="a" style="left:148px;top:406px;width:5px;height:9px;border:1px solid #bbb"></div>
<div class="a" style="left:29px;top:609px;width:1019px;height:13px;background:#38393b"></div>
<div class="a" style="left:92px;top:610px;width:45px;height:12px;background:#2e2f31"></div>
<div class="a" style="left:56px;top:612px;white-space:nowrap;font-size:7.3px;color:#bbb">6: TODO</div>
<div class="a" style="left:106px;top:612px;white-space:nowrap;font-size:7.3px;color:#fff;font-weight:bold">Terminal</div>
<div class="a" style="left:157px;top:612px;white-space:nowrap;font-size:7.3px;color:#bbb">9: Version Control</div>
<div class="a" style="left:238px;top:612px;white-space:nowrap;font-size:7.3px;color:#bbb">File Transfer</div>
<div class="a" style="left:300px;top:612px;white-space:nowrap;font-size:7.3px;color:#bbb">0: Messages</div>
<div class="a" style="left:999px;top:612px;white-space:nowrap;font-size:7.3px;color:#bbb">Event Log</div>
<div class="a" style="left:29px;top:622px;width:1019px;height:13px;background:#353638"></div>
<div class="a" style="left:31px;top:624px;width:9px;height:9px;background:#707070;border-radius:1px"></div>
<div class="a" style="left:47px;top:625px;white-space:nowrap;font-size:7px;color:#c0c0c0">Push successful: Pushed 1 commit to origin/master (yesterday 6:23 PM)</div>
<div class="a" style="left:872px;top:624.5px;white-space:nowrap;font-size:7.2px;color:#c0c0c0">36 chars</div>
<div class="a" style="left:908px;top:624.5px;white-space:nowrap;font-size:7.2px;color:#c0c0c0">45:49</div>
<div class="a" style="left:932px;top:624.5px;white-space:nowrap;font-size:7.2px;color:#c0c0c0">LF‡</div>
<div class="a" style="left:949px;top:624.5px;white-space:nowrap;font-size:7.2px;color:#c0c0c0">UTF-8‡</div>
<div class="a" style="left:979px;top:624.5px;white-space:nowrap;font-size:7.2px;color:#c0c0c0">Git: master‡</div>
<svg class="a" style="left:0;top:0" width="1048" height="634"><g transform="translate(47,612)"><rect x="0" y="1" width="5" height="5" fill="#d8d0b8"/><rect x="3" y="3" width="5" height="5" fill="#a8a090"/></g><g transform="translate(96,611)"><rect x="0.5" y="0.5" width="8" height="9" fill="#1a1a1a" stroke="#999" stroke-width="1"/><rect x="0.5" y="0.5" width="8" height="2" fill="#999"/></g><g transform="translate(147,611)"><circle cx="4" cy="4" r="3.5" fill="#5aa0d0"/><circle cx="5.5" cy="6" r="3.5" fill="#7ab848"/></g><g transform="translate(228,611)"><path d="M1 9 L4 1 L7 9Z" fill="none" stroke="#4a9a8a" stroke-width="1.5"/><rect x="0" y="7" width="9" height="2.5" fill="#4a9a8a"/></g><g transform="translate(291,611)"><rect x="0" y="1" width="8" height="9" rx="1" fill="#e0b868"/><rect x="2" y="3" width="4" height="1" fill="#fff"/><rect x="2" y="5" width="4" height="1" fill="#fff"/></g><g transform="translate(986,611)"><rect x="0" y="0" width="3" height="3" fill="#6ac060"/><rect x="4" y="0" width="3" height="3" fill="#6ac060"/><rect x="0" y="4" width="3" height="3" fill="#6ac060"/><rect x="4" y="4" width="3" height="3" fill="#6ac060"/><text x="7" y="10.5" font-size="6" font-family="Liberation Sans" fill="#bbb">2</text></g><g transform="translate(1020,624)"><circle cx="4" cy="2.5" r="2" fill="#999"/><path d="M0.5 9 Q4 3 7.5 9Z" fill="#999"/></g><g transform="translate(1035,624)"><circle cx="4" cy="4.5" r="4" fill="#666"/><rect x="1" y="3" width="6" height="1" fill="#888"/><rect x="1" y="5" width="6" height="1" fill="#888"/></g></svg>
</div></body></html>
